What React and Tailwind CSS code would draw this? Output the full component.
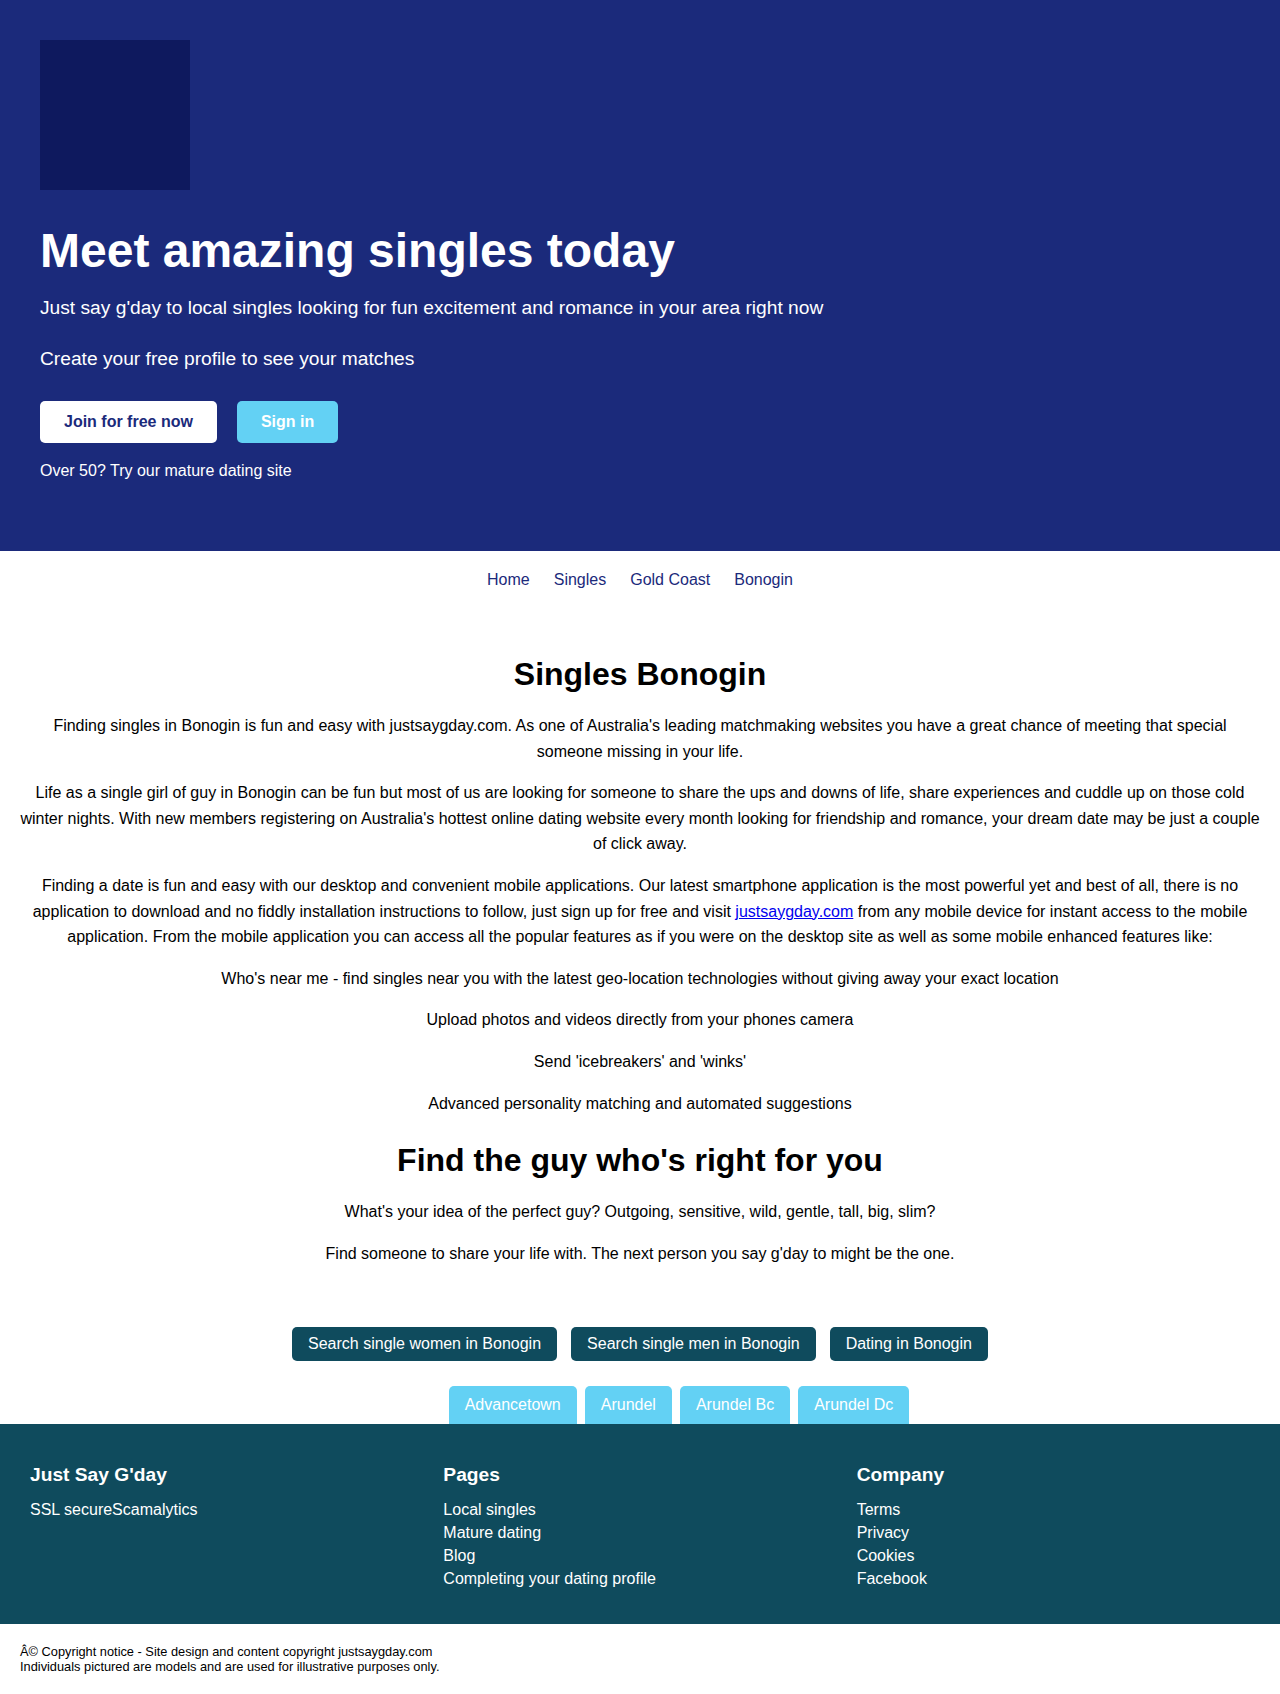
import React from "react";

const font = { fontFamily: '"Liberation Sans", Arial, Helvetica, sans-serif' };

export default function App() {
  return (
    <div style={font} className="w-full bg-white text-black">
      {/* Hero */}
      <section className="bg-[#1b2a7b] text-white pt-10 pl-10 pb-[68px]">
        <div className="w-[150px] h-[150px] bg-[#0e195e]" />
        <h1 className="mt-[37px] text-[48px] leading-[48px] font-bold">Meet amazing singles today</h1>
        <p className="mt-[19px] text-[19.2px] leading-[28px]">
          Just say g'day to local singles looking for fun excitement and romance in your area right now
        </p>
        <p className="mt-[23px] text-[19.2px] leading-[28px]">Create your free profile to see your matches</p>
        <div className="mt-[28px] flex gap-5">
          <a href="#" className="h-[42px] px-6 flex items-center bg-white text-[#1b2a7b] font-bold rounded-[5px] text-[16px]">
            Join for free now
          </a>
          <a href="#" className="h-[42px] px-6 flex items-center bg-[#63d1f4] text-white font-bold rounded-[5px] text-[16px]">
            Sign in
          </a>
        </div>
        <p className="mt-4 text-[16px] leading-6">Over 50? Try our mature dating site</p>
      </section>

      {/* Breadcrumb nav */}
      <nav className="pt-[17px] pb-[15px] flex justify-center gap-6 text-[16px] leading-6 text-[#1b2a7b]">
        <a href="#">Home</a>
        <a href="#">Singles</a>
        <a href="#">Gold Coast</a>
        <a href="#">Bonogin</a>
      </nav>

      {/* Main content */}
      <main className="px-5 pt-12 text-center text-[16px] leading-[25.6px]">
        <h2 className="text-[32px] leading-[38px] font-bold mb-5">Singles Bonogin</h2>
        <p className="mb-4">
          Finding singles in Bonogin is fun and easy with justsaygday.com. As one of Australia's leading matchmaking websites you have a great chance of meeting that special someone missing in your life.
        </p>
        <p className="mb-4">
          Life as a single girl of guy in Bonogin can be fun but most of us are looking for someone to share the ups and downs of life, share experiences and cuddle up on those cold winter nights. With new members registering on Australia's hottest online dating website every month looking for friendship and romance, your dream date may be just a couple of click away.
        </p>
        <p className="mb-4">
          Finding a date is fun and easy with our desktop and convenient mobile applications. Our latest smartphone application is the most powerful yet and best of all, there is no application to download and no fiddly installation instructions to follow, just sign up for free and visit{" "}
          <a href="#" className="text-[#0000ee] underline">justsaygday.com</a> from any mobile device for instant access to the mobile application. From the mobile application you can access all the popular features as if you were on the desktop site as well as some mobile enhanced features like:
        </p>
        <p className="mb-4">Who's near me - find singles near you with the latest geo-location technologies without giving away your exact location</p>
        <p className="mb-4">Upload photos and videos directly from your phones camera</p>
        <p className="mb-4">Send 'icebreakers' and 'winks'</p>
        <p>Advanced personality matching and automated suggestions</p>
        <h2 className="mt-[25px] text-[32px] leading-[38px] font-bold mb-5">Find the guy who's right for you</h2>
        <p className="mb-4">What's your idea of the perfect guy? Outgoing, sensitive, wild, gentle, tall, big, slim?</p>
        <p>Find someone to share your life with. The next person you say g'day to might be the one.</p>
      </main>

      {/* Search buttons */}
      <div className="mt-[61px] flex justify-center gap-[14px] text-[16px] leading-[18px]">
        <a href="#" className="px-4 py-2 bg-[#0f4b5d] text-white rounded-[5px]">Search single women in Bonogin</a>
        <a href="#" className="px-4 py-2 bg-[#0f4b5d] text-white rounded-[5px]">Search single men in Bonogin</a>
        <a href="#" className="px-4 py-2 bg-[#0f4b5d] text-white rounded-[5px]">Dating in Bonogin</a>
      </div>

      <div className="mt-[25px] flex justify-center gap-2 pl-[78px] text-[16px] leading-[18px]">
        <a href="#" className="px-4 py-[10px] bg-[#63d1f4] text-white rounded-t-[5px]">Advancetown</a>
        <a href="#" className="px-4 py-[10px] bg-[#63d1f4] text-white rounded-t-[5px]">Arundel</a>
        <a href="#" className="px-4 py-[10px] bg-[#63d1f4] text-white rounded-t-[5px]">Arundel Bc</a>
        <a href="#" className="px-4 py-[10px] bg-[#63d1f4] text-white rounded-t-[5px]">Arundel Dc</a>
      </div>

      {/* Footer */}
      <footer className="bg-[#0f4b5d] text-white pt-10 pb-[34px] px-[30px] grid grid-cols-3 gap-5">
        <div>
          <h3 className="text-[19.2px] leading-[22px] font-bold">Just Say G'day</h3>
          <div className="mt-3 text-[16px] leading-[23px]">SSL secureScamalytics</div>
        </div>
        <div>
          <h3 className="text-[19.2px] leading-[22px] font-bold">Pages</h3>
          <ul className="mt-3 text-[16px] leading-[23px]">
            <li><a href="#">Local singles</a></li>
            <li><a href="#">Mature dating</a></li>
            <li><a href="#">Blog</a></li>
            <li><a href="#">Completing your dating profile</a></li>
          </ul>
        </div>
        <div>
          <h3 className="text-[19.2px] leading-[22px] font-bold">Company</h3>
          <ul className="mt-3 text-[16px] leading-[23px]">
            <li><a href="#">Terms</a></li>
            <li><a href="#">Privacy</a></li>
            <li><a href="#">Cookies</a></li>
            <li><a href="#">Facebook</a></li>
          </ul>
        </div>
      </footer>

      <div className="p-5 text-[12.8px] leading-[15px] text-black">
        <div>Â© Copyright notice - Site design and content copyright justsaygday.com</div>
        <div>Individuals pictured are models and are used for illustrative purposes only.</div>
      </div>
    </div>
  );
}
